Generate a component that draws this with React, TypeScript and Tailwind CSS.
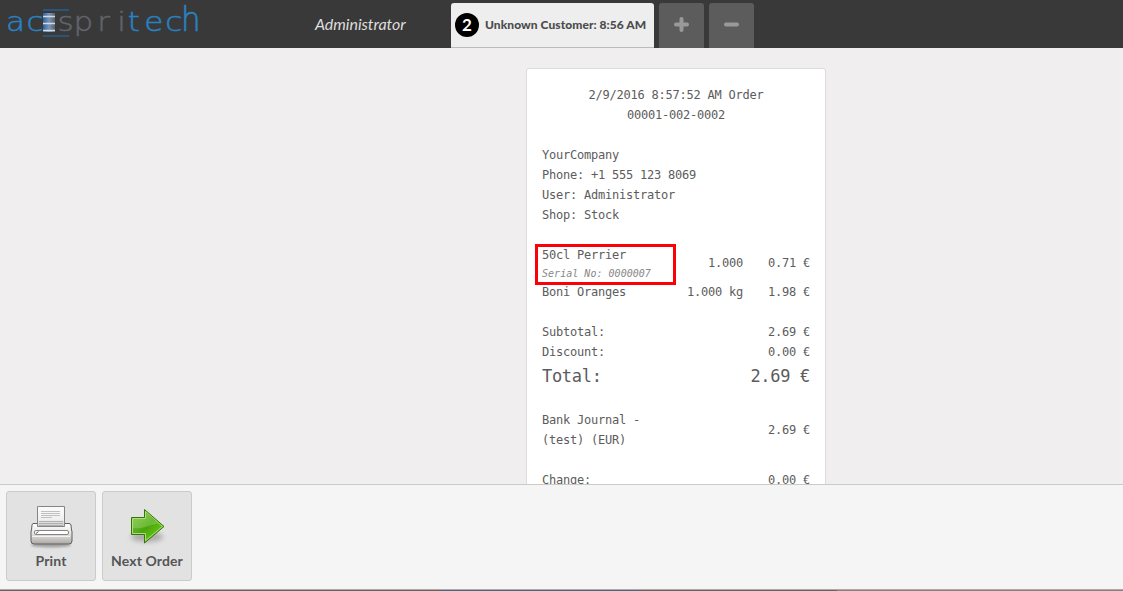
import type { ReactNode } from "react";

function Logo() {
  return (
    <svg width="206" height="44" viewBox="0 0 206 44" className="shrink-0" fontFamily="'DejaVu Sans', sans-serif" fontWeight="200" fontSize="27">
      <defs>
        <linearGradient id="bars" x1="0" x2="1">
          <stop offset="0" stopColor="#2b62a0" />
          <stop offset="0.5" stopColor="#7b95b8" />
          <stop offset="1" stopColor="#59616c" />
        </linearGradient>
      </defs>
      <g transform="scale(1.15 1)" strokeWidth="0.5">
        <g fill="#2882c4" stroke="#2882c4">
          <text x="5.3 23" y="31">ac</text>
          <text x="111 125.500 143.800" y="31">tec</text>
          <text x="157.500" y="24.800" transform="scale(1 1.25)">h</text>
        </g>
        <text x="50 64 84.500 102" y="31" fill="#62636b" stroke="#62636b">spri</text>
      </g>
      <path d="M43 10h26M43 36h26" stroke="#235f8e" strokeWidth="1.4" />
      <path d="M43 13h12v19H43z" fill="url(#bars)" />
      <path d="M43 16.5h12M43 23.5h12M43 30.5h12" stroke="#d4dae4" strokeWidth="1.3" />
    </svg>
  );
}

function Printer() {
  return (
    <svg width="48" height="48" viewBox="0 0 48 48">
      <defs>
        <linearGradient id="body" x1="0" y1="0" x2="0" y2="1">
          <stop offset="0" stopColor="#fff" />
          <stop offset="0.5" stopColor="#e4e4e2" />
          <stop offset="1" stopColor="#aaa9a6" />
        </linearGradient>
        <linearGradient id="sheet" x1="0" y1="0" x2="0" y2="1">
          <stop offset="0" stopColor="#fcfcfc" />
          <stop offset="0.65" stopColor="#f0f0f0" />
          <stop offset="1" stopColor="#c8c8c8" />
        </linearGradient>
        <filter id="soft" x="-20%" y="-80%" width="140%" height="260%"><feGaussianBlur stdDeviation="1.2" /></filter>
      </defs>
      <ellipse cx="24" cy="43" rx="20" ry="2.5" fill="#777" opacity=".6" filter="url(#soft)" />
      <path d="M6 21.500h36q1.500 0 2 1.500l.5 5q.5 1 .5 2v9q0 3-3 3h-35q-3 0-3-3v-9q0-1 .5-2l.5-5q.5-1.500 1-1.500z" fill="url(#body)" stroke="#606060" />
      <path d="M10.500 4.500h27v20h-27z" fill="url(#sheet)" stroke="#858585" />
      <path d="M14 9.500h19M14 11.500h19M14 13.500h19M14 15.500h11" stroke="#c0c0c0" />
      <path d="M12 19.500h24M12 21.500h24M12 23.500h24" stroke="#b0b0b0" />
      <rect x="7.500" y="28.500" width="34" height="4" rx="1.500" fill="#fff" stroke="#858585" />
      <path d="M9 31.500l2.500-2" stroke="#555" />
      <path d="M5 34.500h38" stroke="#fff" opacity=".7" />
    </svg>
  );
}

function Arrow() {
  return (
    <svg width="48" height="48" viewBox="0 0 48 48">
      <defs>
        <linearGradient id="green" x1="0" y1="0" x2="1" y2="1">
          <stop offset="0" stopColor="#85c852" />
          <stop offset="0.5" stopColor="#4aa50d" />
          <stop offset="1" stopColor="#79dc20" />
        </linearGradient>
        <filter id="shade" x="-20%" y="-60%" width="140%" height="220%"><feGaussianBlur stdDeviation="2.5" /></filter>
      </defs>
      <ellipse cx="24" cy="35" rx="16" ry="5" fill="#555" opacity=".4" filter="url(#shade)" />
      <g transform="translate(0 1)">
        <path d="M8.500 14.500h13V6.500L41 23.500 21.500 40v-8.500h-13z" fill="url(#green)" stroke="#3a7304" />
        <path d="M9.500 15.500h13v-7L39.400 23.500 22.500 37.700v-7.200h-13z" fill="none" stroke="#a9df7b" />
        <path d="M10 16h13v-6l12 10.500Q27 22 22 24q-6 2-12 1z" fill="#b9e88f" opacity=".3" />
      </g>
    </svg>
  );
}

function ActionButton({ label, children }: { label: string; children: ReactNode }) {
  return (
    <button className="flex h-[90px] w-[90px] flex-col items-center rounded-[3px] border border-[#cacaca] bg-[#e2e2e2] pt-[10px] font-[Lato,sans-serif] text-[14px] font-bold text-[#555]">
      {children}
      <span className="mt-px leading-5 tracking-[0.12px] whitespace-nowrap">{label}</span>
    </button>
  );
}

function Line({ name, qty, price }: { name: ReactNode; qty?: string; price: string }) {
  return (
    <div className="flex items-center whitespace-pre">
      <div className="w-[124px]">{name}</div>
      <div className="w-[77px] text-right">{qty}</div>
      <div className="flex-1 text-right">{price}</div>
    </div>
  );
}

export default function App() {
  return (
    <div className="flex h-[591px] w-[1123px] flex-col overflow-hidden bg-[#f0eeee] font-[Lato,sans-serif] text-[#555]">
      <header className="flex h-12 shrink-0 bg-[#393939]">
        <Logo />
        <div className="flex w-[245px] items-center pb-px pl-[109px] text-[16px] tracking-[-0.05px] text-[#ddd] italic">Administrator</div>
        <div className="flex items-end gap-[5px]">
          <div className="flex h-[45px] w-[203px] items-center rounded-t-[3px] border-b border-[#bbb] bg-[#eee] pl-[4px]">
            <span className="flex h-6 w-6 shrink-0 items-center justify-center rounded-full bg-black text-[17px] font-bold text-white">2</span>
            <span className="ml-[6px] text-[12px] font-black tracking-[0.06px] whitespace-nowrap text-[#4c4c4c]">Unknown Customer: 8:56 AM</span>
          </div>
          <div className="flex h-[45px] w-[45px] items-center justify-center rounded-t-[3px] bg-[#5c5c5c] pb-[2px]">
            <svg width="15" height="15"><path d="M7.500 2v11M2 7.500h11" stroke="#999" strokeWidth="4" strokeLinecap="round" /></svg>
          </div>
          <div className="flex h-[45px] w-[45px] items-center justify-center rounded-t-[3px] bg-[#5c5c5c] pb-[2px]">
            <svg width="15" height="15"><path d="M2 7.500h11" stroke="#999" strokeWidth="4" strokeLinecap="round" /></svg>
          </div>
        </div>
      </header>
      <main className="flex min-h-0 flex-1 overflow-hidden pt-5 pl-[526px]">
        <section className="h-[500px] w-[300px] shrink-0 rounded-[3px] border border-[#dcdcdc] bg-white px-[15px] pt-[16px] font-['DejaVu_Sans_Mono',monospace] text-[12px] leading-5 tracking-[-0.225px] text-[#5c5c5c]">
          <div className="text-center">2/9/2016 8:57:52 AM Order<br />00001-002-0002</div>
          <div className="mt-5">YourCompany<br />Phone: +1 555 123 8069<br />User: Administrator<br />Shop: Stock</div>
          <div className="mt-5 h-[37px]">
            <div className="relative">
              <Line
                name={<><div>50cl Perrier</div><div className="h-[16px] text-[10px] leading-[17px] tracking-[0.03px] text-[#888] italic">Serial No: 0000007</div></>}
                qty="1.000"
                price="0.71 €"
              />
              <div className="absolute -top-[1px] -left-[7px] h-[41px] w-[141px] border-[3px] border-[#fb0007]" />
            </div>
          </div>
          <Line name="Boni Oranges" qty="1.000 kg" price="1.98 €" />
          <div className="mt-5">
            <Line name="Subtotal:" price="2.69 €" />
            <Line name="Discount:" price="0.00 €" />
          </div>
          <div className="flex h-[28px] items-center justify-between text-[17px] tracking-[-0.3px]"><span>Total:</span><span>2.69 €</span></div>
          <div className="mt-5">
            <Line name={<>Bank Journal -<br />(test) (EUR)</>} price="2.69 €" />
          </div>
          <div className="mt-5"><Line name="Change:" price="0.00 €" /></div>
        </section>
      </main>
      <footer className="flex h-[105px] shrink-0 gap-[6px] border-t border-[#cacaca] bg-[#f5f5f5] pt-[6px] pl-[6px]">
        <ActionButton label="Print"><Printer /></ActionButton>
        <ActionButton label="Next Order"><Arrow /></ActionButton>
      </footer>
      <div className="h-px shrink-0 bg-[#aaa]" />
      <div className="flex h-px shrink-0 bg-[#686464]">
        <div className="ml-[440px] h-px w-[198px] bg-[#4c6780]" />
        <div className="ml-[199px] h-px flex-1 bg-[#8d8177]" />
      </div>
    </div>
  );
}
